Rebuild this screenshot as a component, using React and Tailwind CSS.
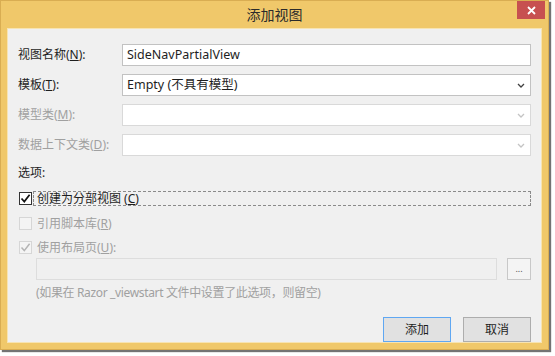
import React from "react";

function Chevron({ disabled }) {
  return (
    <svg width="8" height="5" viewBox="0 0 8 5" className="shrink-0">
      <path d="M1 1 L4 4 L7 1" fill="none" stroke={disabled ? "#c4c4c4" : "#404040"} strokeWidth="1.3" />
    </svg>
  );
}

function Row({ label, disabled, children }) {
  return (
    <div className="flex items-center h-[22px]">
      <div className={`w-[104px] shrink-0 ${disabled ? "text-[#a0a0a0]" : "text-[#1e1e1e]"}`}>{label}</div>
      {children}
    </div>
  );
}

function Check({ state }) {
  if (state === "checked") {
    return (
      <div className="w-[13px] h-[13px] border border-[#333333] bg-white flex items-center justify-center shrink-0">
        <svg width="11" height="11" viewBox="0 0 11 11">
          <path d="M1.5 5.5 L4.3 8.6 L9.6 1.8" fill="none" stroke="#111" strokeWidth="1.7" />
        </svg>
      </div>
    );
  }
  return (
    <div className="w-[13px] h-[13px] border border-[#d6d6d6] bg-[#f4f4f4] flex items-center justify-center shrink-0">
      {state === "disabledChecked" && (
        <svg width="11" height="11" viewBox="0 0 11 11">
          <path d="M1.5 5.5 L4.3 8.6 L9.6 1.8" fill="none" stroke="#b4b4b4" strokeWidth="1.5" />
        </svg>
      )}
    </div>
  );
}

export default function App() {
  return (
    <div className="w-[555px] h-[356px] bg-white font-['Noto_Sans','Noto_Sans_CJK_SC',sans-serif] text-[12px] leading-none overflow-hidden">
      <div className="w-[549px] h-[350px] bg-[#f0c86a] border border-[#d9ad52] shadow-[2px_2px_1px_rgba(0,0,0,0.55)] flex flex-col">
        <div className="h-[27px] shrink-0 flex items-start relative">
          <div className="flex-1 text-center pt-[6px] text-[14px] text-[#2b2b2b] font-['Noto_Sans_CJK_SC',sans-serif]">添加视图</div>
          <div className="absolute right-[3px] top-0 w-[28px] h-[18px] bg-[#c75050] flex items-center justify-center">
            <svg width="9" height="9" viewBox="0 0 9 9">
              <path d="M1 1 L8 8 M8 1 L1 8" stroke="white" strokeWidth="1.8" />
            </svg>
          </div>
        </div>
        <div className="mx-[6px] h-[315px] bg-[#f0f0f0] border border-[#f7e4b3] flex flex-col pl-[10px] pr-[10px]">
          <div className="mt-[15px] flex flex-col gap-[8px]">
            <Row label={<>视图名称(<span className="underline">N</span>):</>}>
              <div className="flex-1 h-full bg-white border border-[#c2c2c2] flex items-center pl-[4px] text-[#1e1e1e] text-[12.5px]">SideNavPartialView</div>
            </Row>
            <Row label={<>模板(<span className="underline">T</span>):</>}>
              <div className="flex-1 h-full bg-white border border-[#c2c2c2] flex items-center pl-[4px] pr-[5px] text-[#1e1e1e] text-[12.5px]">
                <span className="flex-1">Empty (不具有模型)</span>
                <Chevron />
              </div>
            </Row>
            <Row disabled label={<>模型类(<span className="underline">M</span>):</>}>
              <div className="flex-1 h-full bg-white border border-[#d9d9d9] flex items-center justify-end pr-[5px]">
                <Chevron disabled />
              </div>
            </Row>
            <Row disabled label={<>数据上下文类(<span className="underline">D</span>):</>}>
              <div className="flex-1 h-full bg-white border border-[#d9d9d9] flex items-center justify-end pr-[5px]">
                <Chevron disabled />
              </div>
            </Row>
          </div>
          <div className="mt-[11px] text-[#1e1e1e]">选项:</div>
          <div className="mt-[12px] flex items-center h-[15px] pl-[1px]">
            <Check state="checked" />
            <div className="ml-[1px] flex-1 h-[15px] border border-dashed border-[#8a8a8a] flex items-center pl-[3px] text-[#1e1e1e]">
              创建为分部视图 (<span className="underline">C</span>)
            </div>
          </div>
          <div className="mt-[10px] flex items-center h-[15px] pl-[1px] text-[#a0a0a0]">
            <Check state="disabled" />
            <div className="ml-[5px]">引用脚本库(<span className="underline">R</span>)</div>
          </div>
          <div className="mt-[9px] flex items-center h-[15px] pl-[1px] text-[#a0a0a0]">
            <Check state="disabledChecked" />
            <div className="ml-[5px]">使用布局页(<span className="underline">U</span>):</div>
          </div>
          <div className="mt-[3px] ml-[18px] flex items-center h-[22px] gap-[10px]">
            <div className="flex-1 h-full bg-[#f0f0f0] border border-[#dddddd]"></div>
            <div className="w-[24px] h-full border border-[#c8c8c8] bg-[#f4f4f4] flex items-end justify-center pb-[6px] text-[#555] text-[9px]">...</div>
          </div>
          <div className="mt-[7px] ml-[18px] text-[#a0a0a0] tracking-[-0.35px]">(如果在 Razor _viewstart 文件中设置了此选项，则留空)</div>
          <div className="mt-[18px] flex justify-end gap-[12px]">
            <div className="w-[68px] h-[25px] bg-[#e1e1e1] border border-[#5fa7f2] flex items-center justify-center text-[#1e1e1e]">添加</div>
            <div className="w-[68px] h-[25px] bg-[#e1e1e1] border border-[#adadad] flex items-center justify-center text-[#1e1e1e]">取消</div>
          </div>
        </div>
      </div>
    </div>
  );
}
